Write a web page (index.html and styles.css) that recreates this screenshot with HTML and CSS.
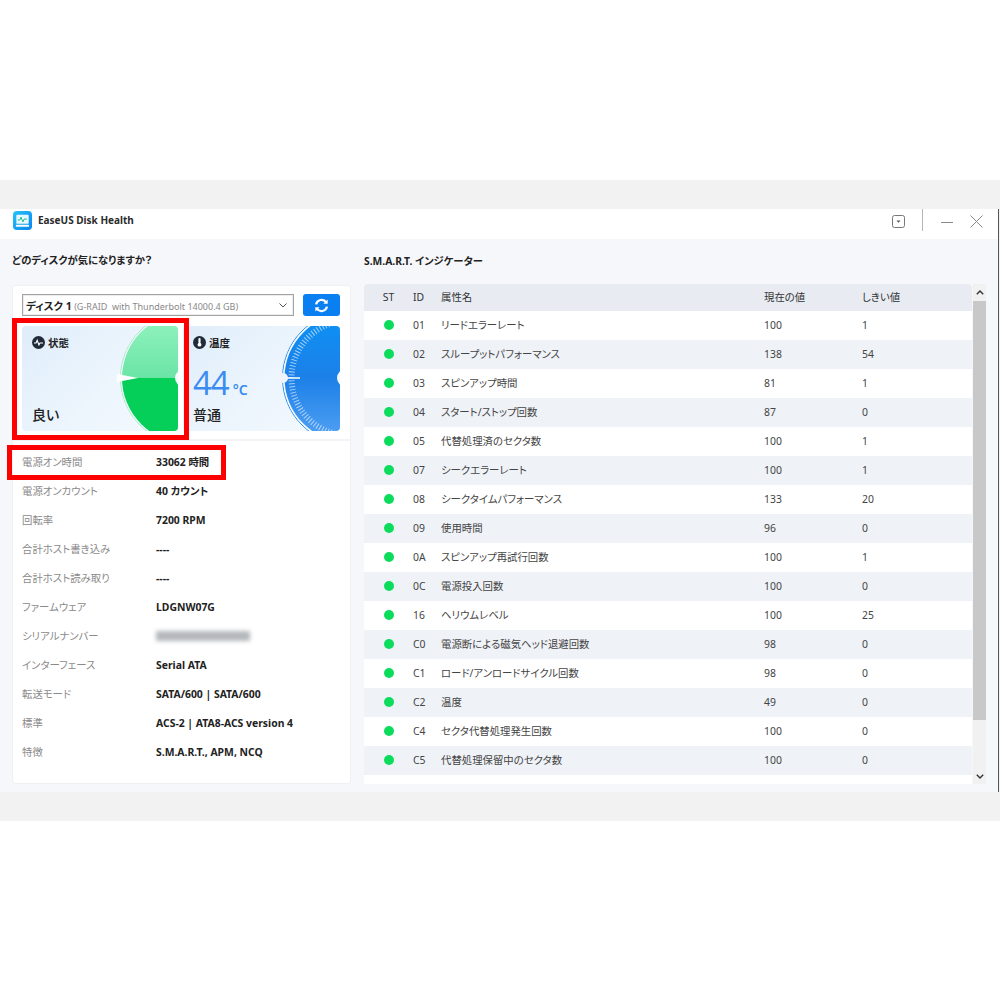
FILE: index.html
```html
<!DOCTYPE html>
<html lang="ja">
<head>
<meta charset="utf-8">
<title>EaseUS Disk Health</title>
<link rel="stylesheet" href="styles.css">
</head>
<body>
<div class="frame">
  <header class="titlebar">
    <div class="brand">
      <svg class="logo" viewBox="0 0 20 20" width="19" height="19">
        <defs><linearGradient id="lg" x1="0" y1="0" x2="1" y2="1"><stop offset="0" stop-color="#27c3f7"/><stop offset="1" stop-color="#0a84f0"/></linearGradient></defs>
        <rect width="20" height="20" rx="4" fill="url(#lg)"/>
        <rect x="3.5" y="4" width="13" height="9.5" rx="1" fill="#e8f8ff"/>
        <path d="M5 9.5h2.2l1.2-3 2 5 1.3-3h3" fill="none" stroke="#15b88a" stroke-width="1"/>
        <rect x="3" y="14.5" width="14" height="2" rx=".8" fill="#fff"/>
      </svg>
      <span class="brand-name">EaseUS Disk Health</span>
    </div>
    <div class="controls">
      <svg class="ctl-menu" viewBox="0 0 13 13" width="13" height="13"><rect x=".5" y=".5" width="12" height="12" rx="2" fill="none" stroke="#777"/><path d="M4.5 5.5h4l-2 2.2z" fill="#555"/></svg>
      <span class="ctl-sep"></span>
      <svg class="ctl-min" viewBox="0 0 12 12" width="12" height="12"><path d="M0 7.5h12" stroke="#888" stroke-width="1"/></svg>
      <svg class="ctl-close" viewBox="0 0 13 13" width="13" height="13"><path d="M.5.5l12 12M12.5.5l-12 12" stroke="#888" stroke-width="1" fill="none"/></svg>
    </div>
  </header>

  <main class="content">
    <section class="left">
      <h2 class="heading">どのディスクが気になりますか？</h2>
      <div class="card">
        <div class="picker">
          <div class="select">
            <span class="select-text"><b>ディスク 1</b> <span class="muted">(G-RAID&nbsp; with Thunderbolt 14000.4 GB)</span></span>
            <svg viewBox="0 0 8 5" width="8" height="5"><path d="M.5.5L4 4 7.5.5" fill="none" stroke="#555" stroke-width="1"/></svg>
          </div>
          <button class="refresh" type="button" aria-label="更新">
            <svg viewBox="0 0 16 16" width="15" height="15"><path d="M2.2 6.8A6 6 0 0 1 13 4.6M13.8 9.2A6 6 0 0 1 3 11.4" fill="none" stroke="#fff" stroke-width="2.4"/><path d="M14.6 1.6v4.6H10zM1.4 14.4V9.8H6z" fill="#fff"/></svg>
          </button>
        </div>

        <div class="gauges">
          <div class="panel">
            <div class="panel-text">
              <div class="panel-title">
                <svg viewBox="0 0 12 12" width="13" height="13"><circle cx="6" cy="6" r="6" fill="#1f2b3a"/><path d="M1.8 6.4h2l1-2.4 1.6 4.2 1-1.8h2.8" fill="none" stroke="#fff" stroke-width="1"/></svg>
                <span>状態</span>
              </div>
              <div class="panel-state">良い</div>
            </div>
            <svg class="dial" viewBox="0 0 68 105" width="68" height="105">
              <defs>
                <linearGradient id="gt" x1="0" y1="0" x2="0" y2="1"><stop offset="0" stop-color="#95f4bf"/><stop offset="1" stop-color="#3fd58c"/></linearGradient>
                <clipPath id="cu"><rect x="0" y="0" width="68" height="52"/></clipPath>
                <clipPath id="cl"><rect x="0" y="52" width="68" height="53"/></clipPath>
              </defs>
              <circle cx="77" cy="52" r="66.5" fill="none" stroke="#8fe8bb" stroke-width=".8"/>
              <circle cx="77" cy="52" r="65.6" fill="none" stroke="#fff" stroke-width=".8"/>
              <circle cx="77" cy="52" r="65" fill="url(#gt)" clip-path="url(#cu)"/>
              <circle cx="77" cy="52" r="65" fill="#05cf58" clip-path="url(#cl)"/>
              <circle cx="74" cy="52" r="9" fill="#f4f9fe"/>
              <path d="M7 48L28 52 7 56z" fill="#fff"/>
            </svg>
            <span class="mark mark-gauge"></span>
          </div>

          <div class="panel">
            <div class="panel-text">
              <div class="panel-title">
                <svg viewBox="0 0 12 12" width="13" height="13"><circle cx="6" cy="6" r="6" fill="#1f2b3a"/><rect x="5" y="1.8" width="2" height="5" rx="1" fill="#fff"/><circle cx="6" cy="8" r="1.8" fill="#fff"/></svg>
                <span>温度</span>
              </div>
              <div class="temp"><span class="temp-num">44</span><span class="temp-unit">°C</span></div>
              <div class="panel-state">普通</div>
            </div>
            <svg class="dial" viewBox="0 0 68 105" width="68" height="105">
              <defs>
                <linearGradient id="gb" x1="0" y1="0" x2="0" y2="1"><stop offset="0" stop-color="#0c92f4"/><stop offset=".5" stop-color="#1c80e8"/><stop offset="1" stop-color="#55a3f3"/></linearGradient>
              </defs>
              <circle cx="77" cy="52" r="66.5" fill="none" stroke="#2f8fee" stroke-width="1"/>
              <circle cx="77" cy="52" r="65.5" fill="none" stroke="#fff" stroke-width="1"/>
              <circle cx="77" cy="52" r="64.5" fill="url(#gb)"/>
              <circle cx="77" cy="52" r="57.5" fill="none" stroke="#d5e9fb" stroke-width="6" stroke-dasharray="1 2" opacity=".75"/>
              <circle cx="74" cy="52" r="9" fill="#f4f9fe"/>
              <path d="M11 52H28" stroke="#fff" stroke-width="1.5"/>
              <circle cx="11" cy="52" r="5" fill="#eef4fa"/>
            </svg>
          </div>
        </div>

        <div class="info">
          <div class="row"><span class="label">電源オン時間</span><span class="value">33062 時間</span><span class="mark mark-row"></span></div>
          <div class="row"><span class="label">電源オンカウント</span><span class="value">40 カウント</span></div>
          <div class="row"><span class="label">回転率</span><span class="value">7200 RPM</span></div>
          <div class="row"><span class="label">合計ホスト書き込み</span><span class="value">----</span></div>
          <div class="row"><span class="label">合計ホスト読み取り</span><span class="value">----</span></div>
          <div class="row"><span class="label">ファームウェア</span><span class="value">LDGNW07G</span></div>
          <div class="row"><span class="label">シリアルナンバー</span><span class="blurred"></span></div>
          <div class="row"><span class="label">インターフェース</span><span class="value">Serial ATA</span></div>
          <div class="row"><span class="label">転送モード</span><span class="value">SATA/600 | SATA/600</span></div>
          <div class="row"><span class="label">標準</span><span class="value">ACS-2 | ATA8-ACS version 4</span></div>
          <div class="row"><span class="label">特徴</span><span class="value">S.M.A.R.T., APM, NCQ</span></div>
        </div>
      </div>
    </section>

    <section class="right">
      <h2 class="heading heading-right">S.M.A.R.T. インジケーター</h2>
      <div class="table-wrap">
        <div class="table-box">
          <table class="smart">
            <colgroup><col class="c-st"><col class="c-id"><col class="c-name"><col class="c-cur"><col class="c-th"></colgroup>
            <thead><tr><th class="st">ST</th><th>ID</th><th>属性名</th><th>現在の値</th><th>しきい値</th></tr></thead>
            <tbody>
              <tr><td class="st"><i class="dot"></i></td><td>01</td><td>リードエラーレート</td><td>100</td><td>1</td></tr>
              <tr><td class="st"><i class="dot"></i></td><td>02</td><td>スループットパフォーマンス</td><td>138</td><td>54</td></tr>
              <tr><td class="st"><i class="dot"></i></td><td>03</td><td>スピンアップ時間</td><td>81</td><td>1</td></tr>
              <tr><td class="st"><i class="dot"></i></td><td>04</td><td>スタート/ストップ回数</td><td>87</td><td>0</td></tr>
              <tr><td class="st"><i class="dot"></i></td><td>05</td><td>代替処理済のセクタ数</td><td>100</td><td>1</td></tr>
              <tr><td class="st"><i class="dot"></i></td><td>07</td><td>シークエラーレート</td><td>100</td><td>1</td></tr>
              <tr><td class="st"><i class="dot"></i></td><td>08</td><td>シークタイムパフォーマンス</td><td>133</td><td>20</td></tr>
              <tr><td class="st"><i class="dot"></i></td><td>09</td><td>使用時間</td><td>96</td><td>0</td></tr>
              <tr><td class="st"><i class="dot"></i></td><td>0A</td><td>スピンアップ再試行回数</td><td>100</td><td>1</td></tr>
              <tr><td class="st"><i class="dot"></i></td><td>0C</td><td>電源投入回数</td><td>100</td><td>0</td></tr>
              <tr><td class="st"><i class="dot"></i></td><td>16</td><td>ヘリウムレベル</td><td>100</td><td>25</td></tr>
              <tr><td class="st"><i class="dot"></i></td><td>C0</td><td>電源断による磁気ヘッド退避回数</td><td>98</td><td>0</td></tr>
              <tr><td class="st"><i class="dot"></i></td><td>C1</td><td>ロード/アンロードサイクル回数</td><td>98</td><td>0</td></tr>
              <tr><td class="st"><i class="dot"></i></td><td>C2</td><td>温度</td><td>49</td><td>0</td></tr>
              <tr><td class="st"><i class="dot"></i></td><td>C4</td><td>セクタ代替処理発生回数</td><td>100</td><td>0</td></tr>
              <tr><td class="st"><i class="dot"></i></td><td>C5</td><td>代替処理保留中のセクタ数</td><td>100</td><td>0</td></tr>
            </tbody>
          </table>
        </div>
        <div class="scrollbar">
          <svg viewBox="0 0 8 5" width="8" height="5"><path d="M.8 4.2L4 1l3.2 3.2" fill="none" stroke="#333" stroke-width="1.4"/></svg>
          <div class="thumb"></div>
          <svg viewBox="0 0 8 5" width="8" height="5"><path d="M.8.8L4 4 7.2.8" fill="none" stroke="#333" stroke-width="1.4"/></svg>
        </div>
      </div>
    </section>
  </main>
</div>
</body>
</html>
```
FILE: styles.css
```css
* { box-sizing: border-box; }
html, body { margin: 0; padding: 0; background: #fff; }
body {
  height: 1000px;
  overflow: hidden;
  padding-top: 180px;
  font-family: "Noto Sans", "Noto Sans CJK JP", sans-serif;
  font-feature-settings: "palt";
  color: #333;
}
.frame {
  height: 641px;
  background: #f2f2f2;
  padding: 29px 0;
  display: flex;
  flex-direction: column;
}
.titlebar {
  height: 30px;
  flex: none;
  background: #fff;
  display: flex;
  justify-content: space-between;
  border-right: 1px solid #555;
  margin-right: 1px;
}
.brand { display: flex; align-items: flex-start; padding: 2px 0 0 13px; gap: 6px; }
.logo { display: block; }
.brand-name { font-size: 10px; font-weight: 700; line-height: 18px; color: #2b2b2b; }
.controls { display: flex; align-items: flex-start; padding: 6px 15px 0 0; }
.ctl-menu { display: block; margin-right: 17px; }
.ctl-sep { width: 1px; height: 22px; background: #b5b5b5; margin: -6px 18px 0 0; }
.ctl-min { display: block; margin-right: 17px; }
.ctl-close { display: block; }

.content {
  height: 553px;
  flex: none;
  background: #f6f7fb;
  display: grid;
  grid-template-columns: 339px 622px;
  column-gap: 13px;
  padding-left: 12px;
  border-right: 1px solid #555;
  margin-right: 1px;
}
.heading {
  margin: 0;
  height: 46px;
  line-height: 42px;
  font-size: 10.3px;
  font-weight: 700;
  color: #222;
}
.heading-right { height: 45px; line-height: 44px; }

.card {
  height: 499px;
  background: #fff;
  border: 1px solid #eef0f3;
  border-radius: 3px;
  padding: 8px 10px 0 9px;
}
.picker { display: flex; gap: 9px; height: 22px; }
.select {
  width: 272px;
  height: 22px;
  border: 1px solid #a3a3a3;
  box-shadow: inset 0 0 0 1px #ededed;
  background: #fff;
  display: flex;
  align-items: center;
  justify-content: space-between;
  padding: 0 6px 0 3px;
  font-size: 9.6px;
}
.select-text { white-space: nowrap; }
.select-text b { color: #222; font-size: 10.5px; }
.muted { color: #888; font-size: 9px; }
.refresh {
  width: 37px;
  height: 22px;
  border: 0;
  padding: 0;
  border-radius: 3px;
  background: #0a7ff1;
  display: flex;
  align-items: center;
  justify-content: center;
}
.gauges {
  display: grid;
  grid-template-columns: 156px 157px;
  column-gap: 5px;
  margin-top: 10px;
}
.panel {
  position: relative;
  height: 105px;
  border-radius: 4px;
  background: linear-gradient(135deg, #dfedfa 0%, #eef6fd 60%, #f2f9fe 100%);
  display: flex;
  justify-content: space-between;
}
.panel-text {
  display: flex;
  flex-direction: column;
  padding: 10px 0 0 10px;
}
.panel-title {
  display: flex;
  align-items: center;
  gap: 3px;
  height: 13px;
  font-size: 10.5px;
  font-weight: 700;
  color: #222;
}
.panel-title svg { display: block; flex: none; }
.panel-state {
  margin-top: auto;
  margin-bottom: 6px;
  font-size: 14px;
  line-height: 20px;
  font-weight: 500;
  color: #222;
}
.temp {
  margin-top: 14px;
  display: flex;
  align-items: baseline;
  color: #3a8cf0;
}
.temp-num { font-family: "Open Sans", sans-serif; font-size: 33px; line-height: 40px; font-weight: 400; letter-spacing: -1px; }
.temp-unit { font-size: 14px; font-weight: 600; margin-left: 4px; }
.dial { display: block; flex: none; border-radius: 0 4px 4px 0; }

.mark { position: absolute; z-index: 2; border: 5px solid #f00; pointer-events: none; }
.mark-gauge { left: -10px; top: -8px; width: 177px; height: 122px; }
.mark-row { left: -15px; top: -3px; width: 219px; height: 35px; }

.info {
  margin: 8px -10px 0 -9px;
  padding: 7px 10px 0 9px;
  border-top: 2px solid #f3f4f7;
}
.row {
  position: relative;
  height: 29px;
  padding-bottom: 2px;
  display: flex;
  align-items: center;
  font-size: 10.4px;
}
.label { width: 134px; color: #8a8a8a; flex: none; }
.value { font-weight: 700; color: #222; white-space: nowrap; }
.blurred { width: 94px; height: 10px; background: #b4b7bc; filter: blur(2px); }

.table-wrap { display: flex; gap: 1px; height: 500px; }
.table-box {
  width: 608px;
  background: #fff;
  border-radius: 4px 4px 0 0;
  overflow: hidden;
}
.smart {
  width: 608px;
  border-collapse: collapse;
  table-layout: fixed;
  font-size: 10.4px;
  color: #444;
}
.c-st { width: 49px; }
.c-id { width: 28px; }
.c-name { width: 323px; }
.c-cur { width: 98px; }
.c-th { width: 110px; }
.smart th, .smart td { padding: 0 0 2px; text-align: left; font-weight: 400; white-space: nowrap; }
.smart thead tr { height: 27px; background: #e8ecf2; }
.smart th { color: #333; }
.smart tbody tr { height: 29px; }
.smart tbody tr:nth-child(even) { background: #eff2f7; }
.smart .st { text-align: center; }
.dot {
  display: block;
  width: 10px;
  height: 10px;
  margin: 0 auto;
  border-radius: 50%;
  background: #0bdc5c;
}
.scrollbar {
  width: 13px;
  height: 500px;
  background: #f1f1f1;
  display: flex;
  flex-direction: column;
  align-items: center;
  justify-content: space-between;
  padding-top: 6px;
  padding-bottom: 5px;
}
.scrollbar svg { display: block; flex: none; }
.thumb { width: 13px; height: 419px; background: #c8c8c8; margin-bottom: 52px; margin-top: 3px; }
```
